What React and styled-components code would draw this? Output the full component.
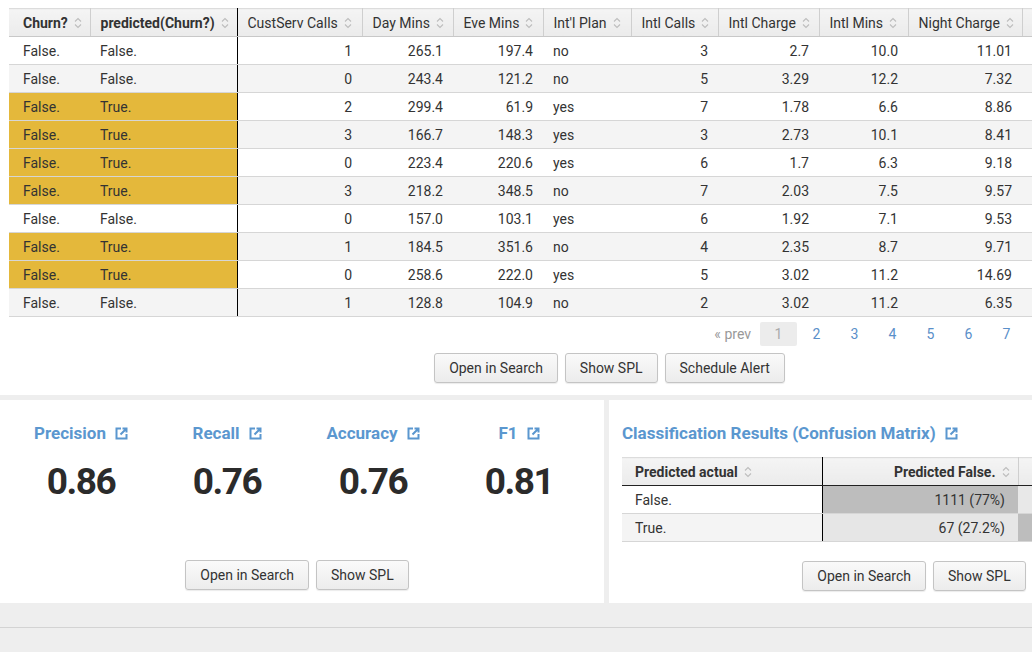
import styled, { createGlobalStyle } from 'styled-components';

const GlobalStyle = createGlobalStyle`
  html, body {
    margin: 0;
    padding: 0;
    background: #eeeeee;
    overflow: hidden;
  }
  body {
    font-family: Roboto, "Liberation Sans", Arial, sans-serif;
    color: #333;
    font-size: 14px;
  }
`;

const Dashboard = styled.div`
  width: 1219px;
  height: 652px;
  display: flex;
  flex-direction: column;
  background: #eeeeee;
`;

const TopPanel = styled.section`
  background: #fff;
  height: 395px;
  padding: 8px 0 0 9px;
  box-sizing: border-box;
  display: flex;
  flex-direction: column;
`;

const DataTable = styled.table`
  border-collapse: collapse;
  table-layout: fixed;
  width: ${({ $width }) => $width}px;
  border-top: 1px solid #dcdcdc;
`;

const Th = styled.th`
  height: 27px;
  padding: 0 10px 0 ${({ $first }) => ($first ? 14 : 10)}px;
  text-align: left;
  font-weight: ${({ $bold }) => ($bold ? 700 : 400)};
  color: #333;
  background: linear-gradient(#f4f4f4, #ebebeb);
  border-bottom: 1px solid #c8c8c8;
  border-right: 1px solid ${({ $split }) => ($split ? '#000' : '#cfcfcf')};
  white-space: nowrap;
  overflow: hidden;
`;

const HeadInner = styled.span`
  display: inline-flex;
  align-items: center;
  gap: 6px;
`;

const Td = styled.td`
  height: 27px;
  padding: 0 10px 0 ${({ $first }) => ($first ? 14 : 10)}px;
  text-align: ${({ $num }) => ($num ? 'right' : 'left')};
  background: ${({ $hl, $stripe }) => ($hl ? '#e4b83b' : $stripe ? '#f4f4f4' : '#fff')};
  border-bottom: 1px solid #d6d6d6;
  border-right: ${({ $split }) => ($split ? '1px solid #000' : 'none')};
  white-space: nowrap;
  overflow: hidden;
`;

const Pager = styled.div`
  display: flex;
  justify-content: flex-end;
  align-items: center;
  padding: 5px 194px 0 0;
  height: 24px;
`;

const PrevLink = styled.span`
  color: #999;
  margin-right: 9px;
`;

const PageLink = styled.span`
  width: 37px;
  height: 24px;
  margin-left: ${({ $first }) => ($first ? 0 : 1)}px;
  display: flex;
  align-items: center;
  justify-content: center;
  border-radius: 2px;
  background: ${({ $active }) => ($active ? '#ececec' : 'transparent')};
  color: ${({ $active }) => ($active ? '#aaa' : '#5a8fc9')};
`;

const ButtonRow = styled.div`
  display: flex;
  justify-content: ${({ $align }) => $align || 'center'};
  gap: 7px;
  margin-top: ${({ $top }) => $top}px;
  padding: ${({ $pad }) => $pad || '0'};
`;

const Button = styled.button`
  height: 30px;
  padding: 0 14px;
  font-family: Roboto, "Liberation Sans", Arial, sans-serif;
  font-size: 14px;
  color: #333;
  background: linear-gradient(#fafafa, #ececec);
  border: 1px solid #c4c4c4;
  border-radius: 3px;
  box-shadow: 0 1px 1px rgba(0, 0, 0, 0.08);
`;

const BottomRow = styled.div`
  display: flex;
  gap: 5px;
  margin-top: 5px;
  height: 203px;
`;

const Panel = styled.section`
  background: #fff;
  width: ${({ $width }) => $width}px;
  box-sizing: border-box;
  padding: ${({ $pad }) => $pad};
  display: flex;
  flex-direction: column;
`;

const MetricsGrid = styled.div`
  display: grid;
  grid-template-columns: repeat(4, 146px);
  padding-left: 8px;
`;

const Metric = styled.div`
  display: flex;
  flex-direction: column;
  align-items: center;
`;

const Title = styled.h3`
  margin: 0;
  font-size: 17px;
  font-weight: 700;
  color: #5b97cf;
  display: flex;
  align-items: center;
  gap: 9px;
  height: 20px;
`;

const Value = styled.div`
  font-size: 37px;
  font-weight: 700;
  color: #2b2b2b;
  letter-spacing: -1.5px;
  margin-top: 20px;
  line-height: 1;
`;

const MatrixTable = styled.table`
  border-collapse: collapse;
  table-layout: fixed;
  width: 596px;
  margin-top: 14px;
`;

const MTh = styled.th`
  height: 27px;
  padding: 0 ${({ $right }) => ($right ? 8 : 13)}px 0 13px;
  text-align: ${({ $right }) => ($right ? 'right' : 'left')};
  font-weight: 700;
  color: #333;
  background: linear-gradient(#f4f4f4, #ebebeb);
  border-top: 1px solid #dcdcdc;
  border-bottom: 1px solid #222;
  border-right: 1px solid ${({ $split }) => ($split ? '#000' : '#cfcfcf')};
  white-space: nowrap;
`;

const MTd = styled.td`
  height: 27px;
  padding: 0 13px;
  text-align: ${({ $right }) => ($right ? 'right' : 'left')};
  background: ${({ $bg }) => $bg || '#fff'};
  border-bottom: 1px solid #d6d6d6;
  border-right: ${({ $split }) => ($split ? '1px solid #000' : 'none')};
  white-space: nowrap;
`;

const Footer = styled.div`
  margin-top: 24px;
  border-top: 1px solid #d3d3d3;
  flex: 1;
`;

function SortIcon() {
  return (
    <svg width="8" height="12" viewBox="0 0 8 12" fill="none" stroke="#bdbdbd" strokeWidth="1.1">
      <path d="M1 4.5 L4 1.5 L7 4.5" />
      <path d="M1 7.5 L4 10.5 L7 7.5" />
    </svg>
  );
}

function ExtLink() {
  return (
    <svg width="13" height="13" viewBox="0 0 13 13" fill="none" stroke="#5b97cf" strokeWidth="2">
      <path d="M6 1.5 H1.5 V11.5 H11.5 V7" />
      <path d="M5.5 7.5 L11.5 1.5 M7.5 1.5 H11.5 V5.5" />
    </svg>
  );
}

const columns = [
  { label: 'Churn?', width: 81, bold: true, first: true },
  { label: 'predicted(Churn?)', width: 147, bold: true, split: true },
  { label: 'CustServ Calls', width: 125, num: true },
  { label: 'Day Mins', width: 91, num: true },
  { label: 'Eve Mins', width: 90, num: true },
  { label: "Int'l Plan", width: 88 },
  { label: 'Intl Calls', width: 87, num: true },
  { label: 'Intl Charge', width: 101, num: true },
  { label: 'Intl Mins', width: 89, num: true },
  { label: 'Night Charge', width: 114, num: true },
  { label: '', width: 100 },
];

const rows = [
  ['False.', 'False.', '1', '265.1', '197.4', 'no', '3', '2.7', '10.0', '11.01'],
  ['False.', 'False.', '0', '243.4', '121.2', 'no', '5', '3.29', '12.2', '7.32'],
  ['False.', 'True.', '2', '299.4', '61.9', 'yes', '7', '1.78', '6.6', '8.86'],
  ['False.', 'True.', '3', '166.7', '148.3', 'yes', '3', '2.73', '10.1', '8.41'],
  ['False.', 'True.', '0', '223.4', '220.6', 'yes', '6', '1.7', '6.3', '9.18'],
  ['False.', 'True.', '3', '218.2', '348.5', 'no', '7', '2.03', '7.5', '9.57'],
  ['False.', 'False.', '0', '157.0', '103.1', 'yes', '6', '1.92', '7.1', '9.53'],
  ['False.', 'True.', '1', '184.5', '351.6', 'no', '4', '2.35', '8.7', '9.71'],
  ['False.', 'True.', '0', '258.6', '222.0', 'yes', '5', '3.02', '11.2', '14.69'],
  ['False.', 'False.', '1', '128.8', '104.9', 'no', '2', '3.02', '11.2', '6.35'],
];

const metrics = [
  { label: 'Precision', value: '0.86' },
  { label: 'Recall', value: '0.76' },
  { label: 'Accuracy', value: '0.76' },
  { label: 'F1', value: '0.81' },
];

export default function App() {
  const tableWidth = columns.reduce((sum, c) => sum + c.width, 0);

  return (
    <>
      <GlobalStyle />
      <Dashboard>
        <TopPanel>
          <DataTable $width={tableWidth}>
            <colgroup>
              {columns.map((c, i) => (
                <col key={i} style={{ width: c.width }} />
              ))}
            </colgroup>
            <thead>
              <tr>
                {columns.map((c, i) => (
                  <Th key={i} $bold={c.bold} $split={c.split} $first={c.first}>
                    {c.label && (
                      <HeadInner>
                        {c.label}
                        <SortIcon />
                      </HeadInner>
                    )}
                  </Th>
                ))}
              </tr>
            </thead>
            <tbody>
              {rows.map((r, ri) => {
                const mismatch = r[0] !== r[1];
                return (
                  <tr key={ri}>
                    {columns.map((c, ci) => (
                      <Td
                        key={ci}
                        $num={c.num}
                        $split={c.split}
                        $first={c.first}
                        $stripe={ri % 2 === 1}
                        $hl={mismatch && ci < 2}
                      >
                        {r[ci] || ''}
                      </Td>
                    ))}
                  </tr>
                );
              })}
            </tbody>
          </DataTable>

          <Pager>
            <PrevLink>« prev</PrevLink>
            {[1, 2, 3, 4, 5, 6, 7].map((p) => (
              <PageLink key={p} $active={p === 1} $first={p === 1}>
                {p}
              </PageLink>
            ))}
          </Pager>

          <ButtonRow $top={7} $pad="0 9px 0 0">
            <Button>Open in Search</Button>
            <Button>Show SPL</Button>
            <Button>Schedule Alert</Button>
          </ButtonRow>
        </TopPanel>

        <BottomRow>
          <Panel $width={604} $pad="23px 0 0 0">
            <MetricsGrid>
              {metrics.map((m) => (
                <Metric key={m.label}>
                  <Title>
                    {m.label}
                    <ExtLink />
                  </Title>
                  <Value>{m.value}</Value>
                </Metric>
              ))}
            </MetricsGrid>
            <ButtonRow $top={60} $pad="0 10px 0 0">
              <Button>Open in Search</Button>
              <Button>Show SPL</Button>
            </ButtonRow>
          </Panel>

          <Panel $width={610} $pad="23px 0 0 13px">
            <Title>
              Classification Results (Confusion Matrix)
              <ExtLink />
            </Title>
            <MatrixTable>
              <colgroup>
                <col style={{ width: 200 }} />
                <col style={{ width: 196 }} />
                <col style={{ width: 200 }} />
              </colgroup>
              <thead>
                <tr>
                  <MTh $split>
                    <HeadInner>
                      Predicted actual
                      <SortIcon />
                    </HeadInner>
                  </MTh>
                  <MTh $right>
                    <HeadInner>
                      Predicted False.
                      <SortIcon />
                    </HeadInner>
                  </MTh>
                  <MTh $right />
                </tr>
              </thead>
              <tbody>
                <tr>
                  <MTd $split>False.</MTd>
                  <MTd $right $bg="#bdbdbd">1111 (77%)</MTd>
                  <MTd $right $bg="#e8e8e8" />
                </tr>
                <tr>
                  <MTd $split $bg="#f4f4f4">True.</MTd>
                  <MTd $right $bg="#e6e6e6">67 (27.2%)</MTd>
                  <MTd $right $bg="#bdbdbd" />
                </tr>
              </tbody>
            </MatrixTable>
            <ButtonRow $top={19} $pad="0 13px 0 0">
              <Button>Open in Search</Button>
              <Button>Show SPL</Button>
            </ButtonRow>
          </Panel>
        </BottomRow>

        <Footer />
      </Dashboard>
    </>
  );
}
